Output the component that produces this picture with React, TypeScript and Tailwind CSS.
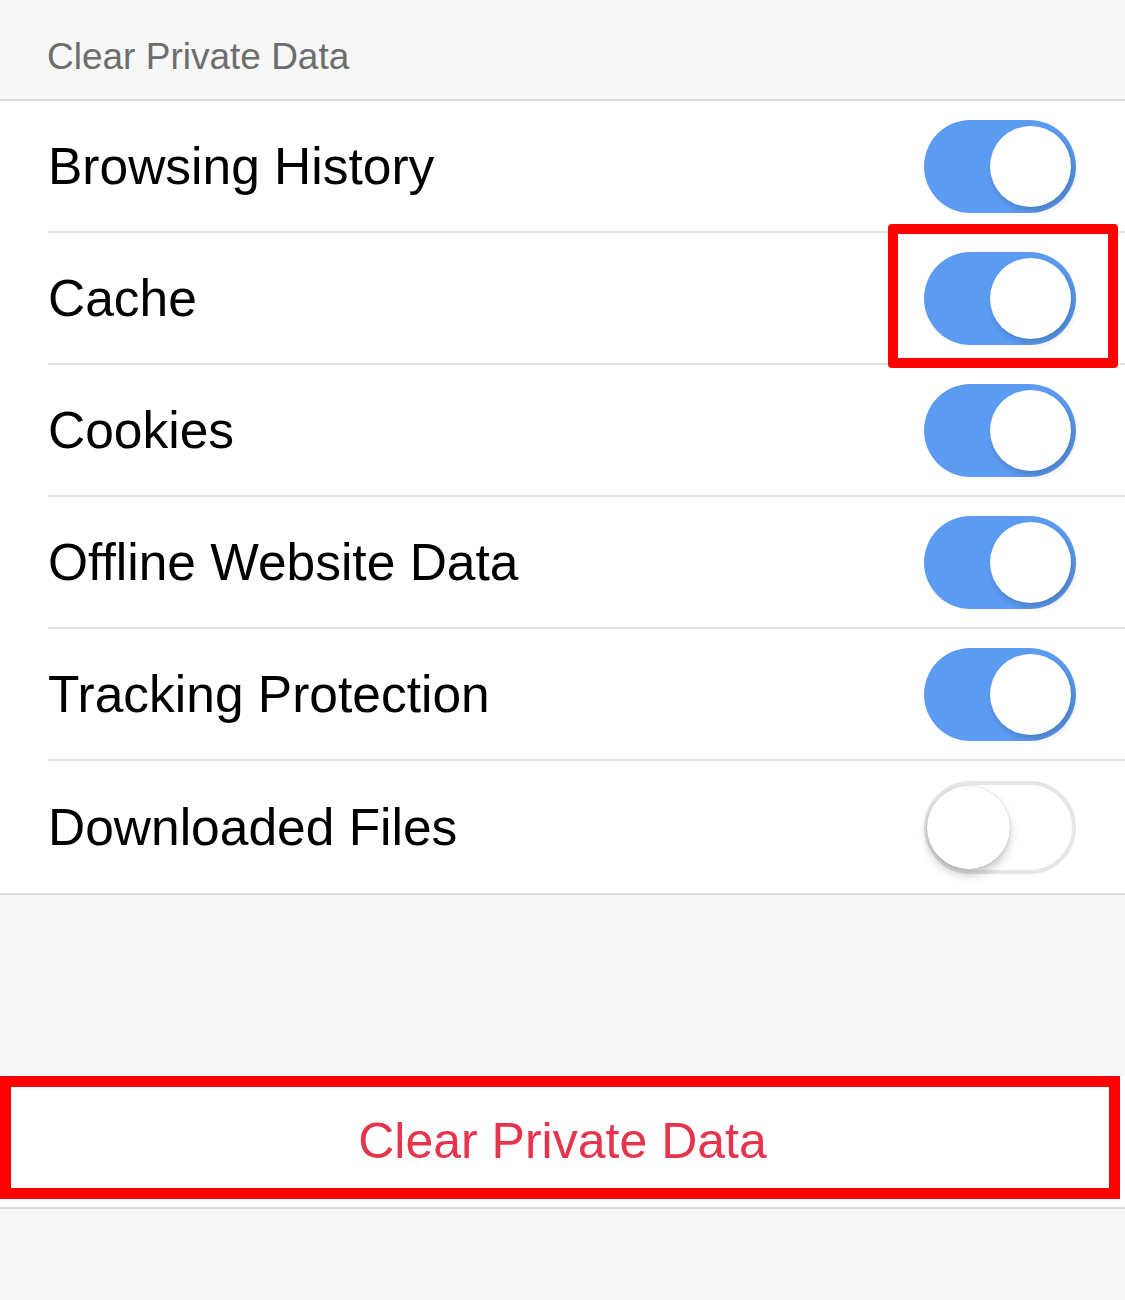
const rows = [
  { label: "Browsing History", on: true },
  { label: "Cache", on: true, marked: true },
  { label: "Cookies", on: true },
  { label: "Offline Website Data", on: true },
  { label: "Tracking Protection", on: true },
  { label: "Downloaded Files", on: false },
];

function Toggle({ on }: { on: boolean }) {
  if (on) {
    return (
      <div className="w-[152px] h-[93px] rounded-full bg-[#5b9bf1] flex items-center justify-end pr-[5px]">
        <div className="w-[81px] h-[81px] rounded-full bg-white shadow-[3px_4px_6px_rgba(0,0,0,0.18)]" />
      </div>
    );
  }
  return (
    <div className="w-[152px] h-[93px] rounded-full border-[4px] border-[#e6e6e6] bg-white flex items-center justify-start">
      <div className="-ml-[1px] w-[83px] h-[83px] rounded-full bg-white shadow-[0_6px_10px_rgba(0,0,0,0.22),0_0_2px_rgba(0,0,0,0.2)]" />
    </div>
  );
}

export default function App() {
  return (
    <div className="w-[1125px] h-[1300px] bg-[#f7f7f7] font-['Liberation_Sans',Arial,sans-serif] flex flex-col">
      {/* Section header */}
      <div className="h-[99px] flex items-end pb-[15px] pl-[47px] text-[37px] text-[#6d6d6d]">
        Clear Private Data
      </div>

      {/* Toggle list */}
      <div className="bg-white border-y-2 border-[#d9d9d9]">
        {rows.map((row, i) => (
          <div key={row.label} className="pl-[48px]">
            <div
              className={`relative h-[132px] flex items-center justify-between pr-[49px] ${
                i < rows.length - 1 ? "border-b-2 border-[#e2e2e2]" : ""
              }`}
            >
              <span className="text-[51.5px] text-black leading-none pt-[2px]">{row.label}</span>
              <Toggle on={row.on} />
              {row.marked && (
                <div className="absolute right-[7px] top-[-9px] w-[230px] h-[144px] border-[10px] border-[#ff0000] rounded-[4px] pointer-events-none" />
              )}
            </div>
          </div>
        ))}
      </div>

      {/* Clear button */}
      <div className="mt-[181px] bg-white border-b-2 border-[#d9d9d9] h-[133px] relative">
        <div className="h-[123px] flex items-center justify-center pt-[8px] text-[50px] text-[#e5344b]">
          Clear Private Data
        </div>
        <div className="absolute left-0 top-0 w-[1120px] h-[123px] border-[11px] border-[#ff0000] pointer-events-none" />
      </div>
    </div>
  );
}
